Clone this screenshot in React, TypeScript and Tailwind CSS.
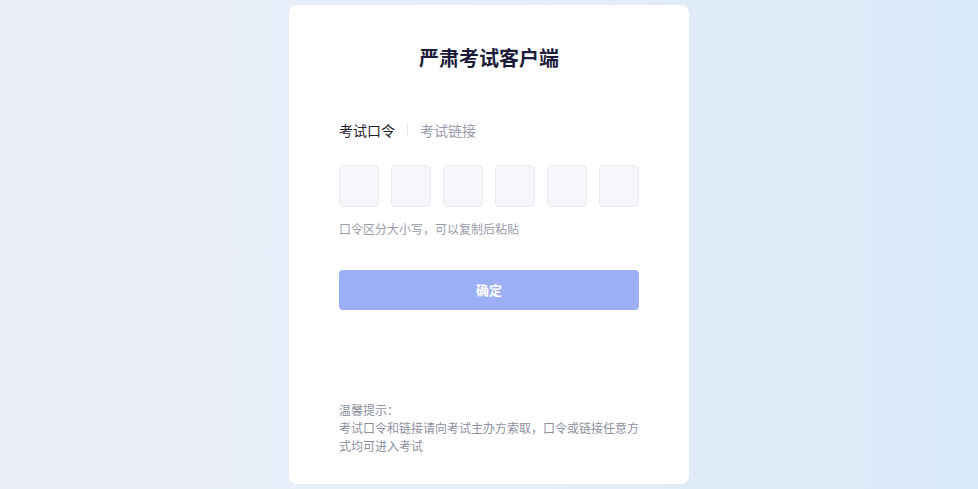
export default function App() {
  const cells = [0, 1, 2, 3, 4, 5];
  return (
    <div
      className="flex h-[489px] w-full items-center justify-center bg-gradient-to-r from-[#ebeff9] via-[#e6eef9] to-[#d8e9f7]"
      style={{ fontFamily: '"Noto Sans CJK SC", "Noto Sans", sans-serif' }}
    >
      <div className="flex h-[479px] w-[400px] flex-col rounded-lg bg-white px-[50px] pt-[39px] pb-[29px]">
        <h1 className="text-center text-[20px] font-bold leading-[28px] text-[#1d1d3b]">严肃考试客户端</h1>

        <div className="mt-[48px] flex items-center text-[14px] leading-[20px]">
          <span className="text-[#1f2330]">考试口令</span>
          <span className="mx-3 h-[14px] w-px bg-[#e6e8ee]"></span>
          <span className="text-[#9a9cab]">考试链接</span>
        </div>

        <div className="mt-[25px] flex gap-3">
          {cells.map((i) => (
            <input
              key={i}
              maxLength={1}
              className="h-[42px] w-[40px] rounded border border-[#eaecf2] bg-[#f6f7fa] text-center text-[16px] outline-none"
            />
          ))}
        </div>

        <p className="mt-[13px] text-[12px] leading-[18px] text-[#9a9cab]">口令区分大小写，可以复制后粘贴</p>

        <button className="mt-[32px] h-[40px] w-full rounded bg-[#9db0f7] text-[13px] font-bold text-white">
          确定
        </button>

        <div className="mt-auto text-[12px] leading-[18px] text-[#8e909e]">
          <p>温馨提示：</p>
          <p>考试口令和链接请向考试主办方索取，口令或链接任意方式均可进入考试</p>
        </div>
      </div>
    </div>
  );
}
